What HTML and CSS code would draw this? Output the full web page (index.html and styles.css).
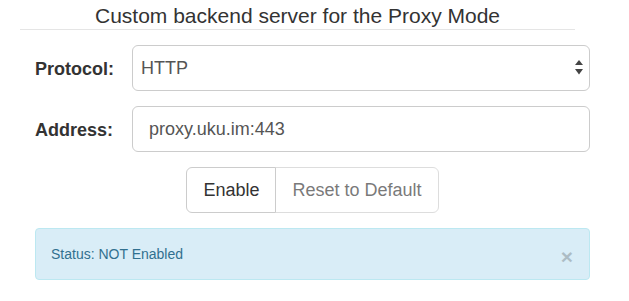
FILE: index.html
```html
<!DOCTYPE html>
<html>
<head>
  <title>Proxy Mode - Settings</title>
  <link rel="stylesheet" href="styles.css">
</head>
<body>
  <div class="page">
    <div class="legend">Custom backend server for the Proxy Mode</div>

    <form class="form">
      <div class="form-row">
        <label class="form-label" for="protocol">Protocol:</label>
        <div class="form-field select-wrap">
          <select id="protocol" class="control select">
            <option>HTTP</option>
            <option>HTTPS</option>
          </select>
          <svg class="select-arrows" width="8" height="15" viewBox="0 0 8 15">
            <path d="M4 0 L8 5 L0 5 Z" fill="#444"/>
            <path d="M0 9 L8 9 L4 14.5 Z" fill="#444"/>
          </svg>
        </div>
      </div>

      <div class="form-row">
        <label class="form-label" for="address">Address:</label>
        <div class="form-field">
          <input type="text" id="address" class="control" value="proxy.uku.im:443">
        </div>
      </div>

      <div class="actions">
        <div class="btn-group">
          <button type="button" class="btn">Enable</button>
          <button type="button" class="btn" disabled>Reset to Default</button>
        </div>
      </div>
    </form>

    <div class="alert">
      <span>Status: NOT Enabled</span>
      <span class="close">&times;</span>
    </div>
  </div>
</body>
</html>
```

FILE: styles.css
```css
body {
  margin: 0;
  font-family: "Liberation Sans", Arial, Helvetica, sans-serif;
  font-size: 14px;
  line-height: 1.42857;
  color: #333;
  background: #fff;
}
.page {
  padding: 0 39px 0 35px;
}
.legend {
  margin: 0 15px 15px -15px;
  padding-top: 2px;
  font-size: 21px;
  line-height: 27px;
  text-align: center;
  border-bottom: 1px solid #e5e5e5;
}
.form {
  margin: 0;
}
.form-row {
  display: flex;
  margin-bottom: 15px;
}
.form-label {
  width: 78px;
  padding-top: 14px;
  text-align: right;
  font-size: 18px;
  font-weight: bold;
  line-height: 20px;
}
.form-field {
  flex: 1;
  margin-left: 19px;
}
.select-wrap {
  position: relative;
}
.control {
  display: block;
  width: 100%;
  height: 46px;
  box-sizing: border-box;
  padding: 0 16px;
  font-family: inherit;
  font-size: 18px;
  color: #555;
  background: #fff;
  border: 1px solid #ccc;
  border-radius: 6px;
  outline: none;
}
.select {
  -webkit-appearance: none;
  appearance: none;
  padding: 0 30px 0 8px;
}
.select-arrows {
  position: absolute;
  right: 7px;
  top: 15px;
  pointer-events: none;
}
.actions {
  display: flex;
  justify-content: center;
  margin-bottom: 15px;
}
.btn-group {
  display: flex;
}
.btn {
  height: 46px;
  padding: 10px 16px;
  font-family: inherit;
  font-size: 18px;
  line-height: 24px;
  color: #333;
  background: #fff;
  border: 1px solid #ccc;
  border-radius: 6px 0 0 6px;
  cursor: pointer;
}
.btn + .btn {
  margin-left: -1px;
  border-radius: 0 6px 6px 0;
}
.btn:disabled {
  opacity: 0.65;
  cursor: not-allowed;
}
.alert {
  display: flex;
  justify-content: space-between;
  align-items: center;
  padding: 15px 16px 15px 15px;
  line-height: 20px;
  color: #31708f;
  background: #d9edf7;
  border: 1px solid #bce8f1;
  border-radius: 4px;
}
.close {
  font-size: 21px;
  font-weight: bold;
  line-height: 20px;
  color: #000;
  opacity: 0.2;
  margin-top: 3px;
  margin-bottom: -3px;
}
```
